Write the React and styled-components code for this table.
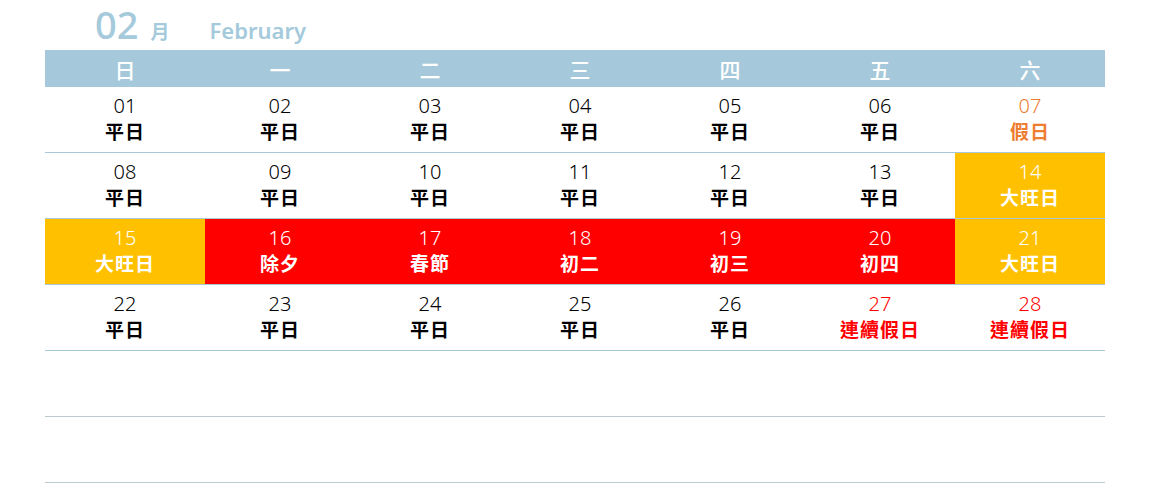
import React from 'react';
import styled, { createGlobalStyle } from 'styled-components';

const GlobalStyle = createGlobalStyle`
  body {
    margin: 0;
    background: #fff;
    font-family: "Noto Sans", "Noto Sans CJK TC", sans-serif;
  }
`;

const Page = styled.div`
  padding: 0 46px 0 45px;
`;

const Title = styled.div`
  display: flex;
  align-items: baseline;
  height: 50px;
  box-sizing: border-box;
  padding: 2px 0 0 50px;
  color: #a4cadb;
  font-family: "Noto Sans", "Noto Sans CJK TC", sans-serif;
`;

const MonthNum = styled.span`
  font-size: 38px;
  line-height: 1.2;
  font-weight: 500;
`;

const MonthChar = styled.span`
  font-size: 19px;
  font-weight: 600;
  margin-left: 12px;
  font-family: "Noto Sans CJK TC", sans-serif;
`;

const MonthName = styled.span`
  font-size: 22px;
  font-weight: 600;
  margin-left: 40px;
`;

const Grid = styled.div`
  display: grid;
  grid-template-columns: 160px repeat(6, 150px);
  width: 1060px;
`;

const HeadCell = styled.div`
  height: 37px;
  background: #a5c9da;
  color: #fff;
  display: flex;
  align-items: center;
  justify-content: center;
  font-size: 21px;
  font-weight: 500;
  font-family: "Noto Sans CJK TC", sans-serif;
`;

const Cell = styled.div`
  height: 66px;
  box-sizing: border-box;
  border-bottom: 1px solid ${({ $line }) => $line || '#a9c9d8'};
  background: ${({ $bg }) => $bg || '#fff'};
  color: ${({ $color }) => $color || '#000'};
  display: flex;
  flex-direction: column;
  align-items: center;
  padding-top: 6px;
`;

const DayNum = styled.div`
  font-size: 20px;
  line-height: 26px;
  font-family: "Noto Sans", sans-serif;
  font-weight: 350;
`;

const DayLabel = styled.div`
  font-size: 19px;
  line-height: 24px;
  font-weight: 600;
  letter-spacing: 1px;
  font-family: "Noto Sans CJK TC", sans-serif;
`;

const weekdays = ['日', '一', '二', '三', '四', '五', '六'];

const ORANGE = '#ffc000';
const RED = '#ff0000';

const days = [
  ['01', '平日'], ['02', '平日'], ['03', '平日'], ['04', '平日'], ['05', '平日'], ['06', '平日'], ['07', '假日', null, '#ed7d31'],
  ['08', '平日'], ['09', '平日'], ['10', '平日'], ['11', '平日'], ['12', '平日'], ['13', '平日'], ['14', '大旺日', ORANGE, '#fff'],
  ['15', '大旺日', ORANGE, '#fff'], ['16', '除夕', RED, '#fff'], ['17', '春節', RED, '#fff'], ['18', '初二', RED, '#fff'],
  ['19', '初三', RED, '#fff'], ['20', '初四', RED, '#fff'], ['21', '大旺日', ORANGE, '#fff'],
  ['22', '平日'], ['23', '平日'], ['24', '平日'], ['25', '平日'], ['26', '平日'], ['27', '連續假日', null, RED], ['28', '連續假日', null, RED],
];

const App = () => (
  <Page>
    <GlobalStyle />
    <Title>
      <MonthNum>02</MonthNum>
      <MonthChar>月</MonthChar>
      <MonthName>February</MonthName>
    </Title>
    <Grid>
      {weekdays.map((w) => <HeadCell key={w}>{w}</HeadCell>)}
      {days.map(([num, label, bg, color]) => (
        <Cell key={num} $bg={bg} $color={color}>
          <DayNum>{num}</DayNum>
          <DayLabel>{label}</DayLabel>
        </Cell>
      ))}
      {Array.from({ length: 14 }).map((_, i) => (
        <Cell key={`e${i}`} $line="#bccbd3" />
      ))}
    </Grid>
  </Page>
);

export default App;
